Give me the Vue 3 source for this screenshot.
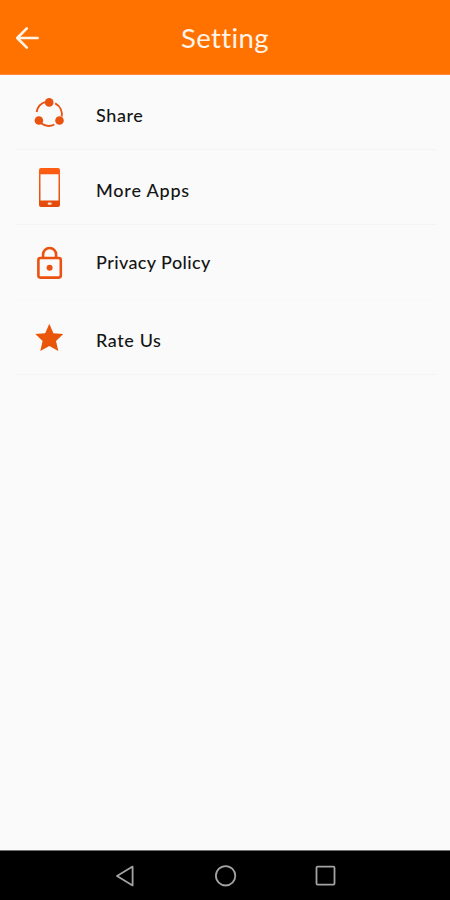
<script setup>
import { ref } from 'vue';

const title = ref('Setting');
const items = ref([
    { id: 'share', label: 'Share' },
    { id: 'apps', label: 'More Apps' },
    { id: 'privacy', label: 'Privacy Policy' },
    { id: 'rate', label: 'Rate Us' },
])
</script>


<template>
    <div class="screen">
      <header class="toolbar">
        <svg class="back" width="26" height="26" viewBox="0 0 26 26">
          <path d="M23.6 13H3.4M12.8 3.4L3.2 13l9.6 9.6" />
        </svg>
        <h1>{{ title }}</h1>
      </header>
      <ul class="menu">
        <li v-for="item in items" :key="item.id" :class="item.id">
          <svg v-if="item.id === 'share'" class="icon" width="34" height="44" viewBox="0 0 34 44">
            <g class="stroke thin">
              <path d="M4.6 22A12.8 12.8 0 0 1 14 11.9" />
              <path d="M23.2 13.3A12.8 12.8 0 0 1 29.7 26.5" />
              <path d="M9 33.3A13 13 0 0 0 22.4 34.5" />
            </g>
            <circle cx="17.2" cy="12.4" r="4.3" />
            <circle cx="6.9" cy="30.5" r="4.3" />
            <circle cx="27.5" cy="30.5" r="4.3" />
          </svg>
          <svg v-else-if="item.id === 'apps'" class="icon" width="34" height="44" viewBox="0 0 34 44">
            <defs>
              <linearGradient id="phone" x1="0" y1="0" x2="0" y2="1">
                <stop offset="0" stop-color="#ff5e12" />
                <stop offset="1" stop-color="#e24a0c" />
              </linearGradient>
            </defs>
            <path
              fill="url(#phone)"
              fill-rule="evenodd"
              d="M9 3h17a2 2 0 0 1 2 2v35a2 2 0 0 1-2 2H9a2 2 0 0 1-2-2V5a2 2 0 0 1 2-2zM8.5 9.2v26.3h18V9.2z"
            />
            <rect class="home" x="15.7" y="37.6" width="4" height="2.2" rx="1" />
          </svg>
          <svg v-else-if="item.id === 'privacy'" class="icon" width="34" height="44" viewBox="0 0 34 44">
            <g class="stroke">
              <rect x="6.4" y="18" width="22.4" height="19.6" rx="2" />
              <path d="M11.1 18v-3.5a6.5 6.5 0 0 1 13 0V18" />
            </g>
            <circle cx="17.6" cy="27.8" r="3" />
          </svg>
          <svg v-else class="icon" width="34" height="44" viewBox="0 0 34 44">
            <defs>
              <linearGradient id="star" x1="0" y1="0" x2="1" y2="1">
                <stop offset="0" stop-color="#f0540a" />
                <stop offset="1" stop-color="#e35608" />
              </linearGradient>
            </defs>
            <path
              fill="url(#star)"
              d="M17.3 8.8l4.1 9.4 9.9.8-7.3 6.9 2.3 10.1-9-5.1-9 5.1 2.3-10.1L3.3 19l9.9-.8z"
            />
          </svg>
          <span>{{ item.label }}</span>
        </li>
      </ul>
      <nav class="navbar">
        <svg width="22" height="22" viewBox="0 0 22 22"><path d="M17.6 1.6v18.8L2 11z" /></svg>
        <svg width="22" height="22" viewBox="0 0 22 22"><circle cx="10.6" cy="10.8" r="9.7" /></svg>
        <svg width="22" height="22" viewBox="0 0 22 22">
          <rect x="1.5" y="1.6" width="18" height="18" rx="1.2" />
        </svg>
      </nav>
    </div>
</template>


<style>
    body {
        margin: 0;
    }
</style>

<style scoped>
    .screen {
        display: flex;
        flex-direction: column;
        width: 450px;
        height: 900px;
        background-color: #fafafa;
        font-family: Lato, "Liberation Sans", sans-serif;
    }

    .toolbar {
        display: grid;
        grid-template-columns: 40px 1fr 40px;
        align-items: center;
        box-sizing: border-box;
        height: 75px;
        padding-top: 2px;
        background-color: #ff7200;
        border-bottom: 1px solid #ff8a3c;
    }

    .back {
        margin-left: 14px;
        fill: none;
        stroke: #fff4e8;
        stroke-width: 2.6;
        stroke-linecap: round;
        stroke-linejoin: round;
    }

    h1 {
        margin: 0;
        color: #fff4ea;
        font-size: 27.5px;
        font-weight: 400;
        line-height: 34px;
        letter-spacing: 0.4px;
        text-align: center;
    }

    .menu {
        flex: 1;
        margin: 0;
        padding: 0 13px 0 16px;
        list-style: none;
    }

    li {
        display: flex;
        align-items: center;
        box-sizing: border-box;
        height: 75px;
        padding-left: 16px;
        border-bottom: 1px solid #f4f4f4;
        color: #151515;
        font-size: 18px;
        font-weight: 500;
        letter-spacing: 0.6px;
    }

    .apps {
        letter-spacing: 0.8px;
    }

    .privacy {
        border-color: #f8f8f8;
        letter-spacing: 0.4px;
    }

    .icon {
        margin-right: 30px;
        fill: #ea5210;
    }

    .stroke {
        fill: none;
        stroke: #ea5210;
        stroke-width: 2.6;
    }

    .thin {
        stroke-width: 1.9;
    }

    .home {
        fill: #ffe3d6;
    }

    li span {
        padding-top: 5px;
    }

    .privacy span {
        padding-top: 0;
    }

    .navbar {
        display: flex;
        justify-content: center;
        align-items: center;
        gap: 78px;
        box-sizing: border-box;
        height: 50px;
        padding-left: 1px;
        border-top: 1px solid #707070;
        background-color: #000;
    }

    .navbar svg {
        fill: none;
        stroke: #a3a3a3;
        stroke-width: 1.8;
        stroke-linejoin: round;
    }
</style>
